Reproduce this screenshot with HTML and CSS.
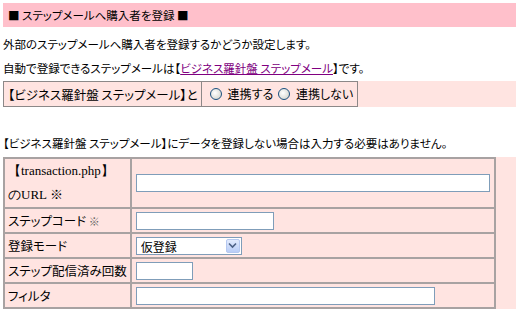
FILE: index.html
```html
<!DOCTYPE html>
<html lang="ja">
<head>
    <meta charset="UTF-8">
    <title>ステップメールへ購入者を登録</title>
    <link rel="stylesheet" href="styles.css">
</head>
<body>

<div class="page-title">■ ステップメールへ購入者を登録 ■</div>

<p class="note">外部のステップメールへ購入者を登録するかどうか設定します。</p>
<p class="note">自動で登録できるステップメールは【<a href="#" class="link">ビジネス羅針盤 ステップメール</a>】です。</p>

<div class="band">
    <table class="link-table">
        <tr>
            <td class="link-label">【ビジネス羅針盤 ステップメール】と</td>
            <td class="link-choice">
                <label class="radio"><input type="radio" name="link"><span class="radio-mark"></span>連携する</label>
                <label class="radio"><input type="radio" name="link"><span class="radio-mark"></span>連携しない</label>
            </td>
        </tr>
    </table>
</div>

<p class="note note-gap">【ビジネス羅針盤 ステップメール】にデータを登録しない場合は入力する必要はありません。</p>

<div class="band">
    <table class="form-table">
        <tr class="row-tall">
            <th><span class="serif">【transaction.php】</span><br><span class="serif">のURL ※</span></th>
            <td><input type="text" class="field field-long"></td>
        </tr>
        <tr>
            <th>ステップコード <span class="mark">※</span></th>
            <td><input type="text" class="field field-mid"></td>
        </tr>
        <tr>
            <th>登録モード</th>
            <td>
                <span class="select-wrap">
                    <select class="select">
                        <option>仮登録</option>
                        <option>本登録</option>
                    </select>
                    <span class="select-btn">
                        <svg width="9" height="7" viewBox="0 0 9 7"><path d="M1 1.5 L4.5 5 L8 1.5" fill="none" stroke="#4d6185" stroke-width="1.6"/></svg>
                    </span>
                </span>
            </td>
        </tr>
        <tr>
            <th>ステップ配信済み回数</th>
            <td><input type="text" class="field field-short"></td>
        </tr>
        <tr>
            <th>フィルタ</th>
            <td><input type="text" class="field field-filter"></td>
        </tr>
    </table>
</div>

</body>
</html>
```

FILE: styles.css
```css
body {
    margin: 3px 0 0 3px;
    font-family: "Noto Sans CJK JP", "Liberation Sans", sans-serif;
    font-size: 11.5px;
    color: #000;
    font-feature-settings: "palt";
}

.page-title {
    background-color: #ffc0cb;
    height: 24px;
    line-height: 24px;
    margin-left: -3px;
    padding-left: 8px;
    font-size: 11.5px;
}

.note {
    margin: 0;
    line-height: 18px;
}

.page-title + .note {
    margin-top: 8px;
}

.note + .note {
    margin-top: 6px;
}

.note-gap {
    margin-top: 27px;
    margin-bottom: 5px;
}

.link {
    color: #800080;
}

.band {
    background-color: #ffe4e1;
    margin-top: 4px;
}

.link-table {
    border-collapse: collapse;
    font-size: 12.5px;
}

.link-table td {
    border: 1px solid #8c8888;
    height: 24px;
    padding: 0 4px;
    white-space: nowrap;
}

.link-label {
    padding-right: 3px !important;
}

.link-choice {
    padding: 0 4px 0 8px !important;
    font-size: 12px;
}

.radio {
    display: inline-flex;
    align-items: center;
    margin-right: 2px;
}

.radio:last-child {
    margin-right: 0;
}

.radio input {
    display: none;
}

.radio-mark {
    width: 10px;
    height: 10px;
    border-radius: 50%;
    border: 1px solid #1c5180;
    background: radial-gradient(circle at 40% 40%, #ffffff 0%, #dcdcd6 70%, #b6b6ae 100%);
    margin-right: 6px;
}

.form-table {
    border-collapse: collapse;
    width: 491px;
    font-size: 12.5px;
}

.form-table th,
.form-table td {
    border: 2px solid #a8a2a2;
    height: 23px;
    padding: 0 4px;
    text-align: left;
    font-weight: normal;
    white-space: nowrap;
}

.form-table th {
    width: 115px;
    padding: 0 3px;
}

.row-tall th,
.row-tall td {
    height: 48px;
}

.serif {
    font-family: "Liberation Serif", serif;
    font-size: 13px;
    line-height: 24px;
}

.mark {
    color: #666;
    font-size: 11px;
}

.field {
    display: block;
    box-sizing: border-box;
    height: 18px;
    border: 1px solid #7f9db9;
    background: #fff;
    padding: 0 2px;
    font-size: 12px;
}

.field-long {
    width: 354px;
}

.field-mid {
    width: 138px;
}

.field-short {
    width: 57px;
}

.field-filter {
    width: 299px;
}

.select-wrap {
    position: relative;
    display: block;
    width: 106px;
    height: 18px;
}

.select {
    appearance: none;
    box-sizing: border-box;
    width: 106px;
    height: 18px;
    border: 1px solid #7f9db9;
    background: #fff;
    font-family: "Noto Sans CJK JP", sans-serif;
    font-size: 12px;
    padding: 0 4px;
    margin: 0;
}

.select-btn {
    position: absolute;
    top: 2px;
    right: 2px;
    width: 14px;
    height: 14px;
    box-sizing: border-box;
    border: 1px solid #b5c8f0;
    border-radius: 2px;
    background: linear-gradient(#e2ebfd, #b8cdf7);
    display: flex;
    align-items: center;
    justify-content: center;
}
```
